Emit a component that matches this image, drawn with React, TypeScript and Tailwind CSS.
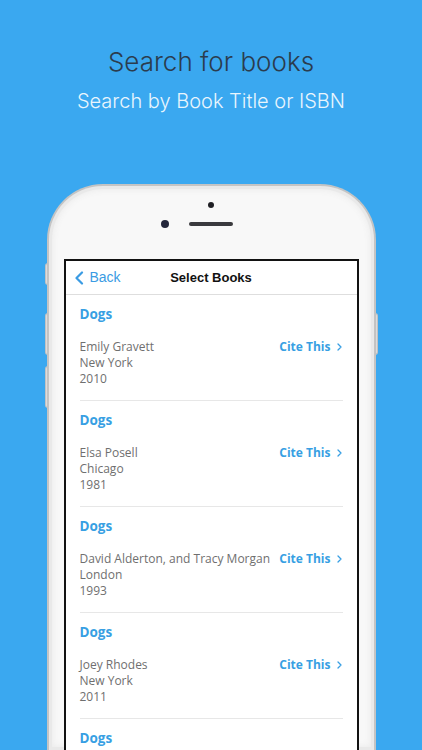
import React from 'react'

interface Book {
  title: string
  author: string
  city: string
  year: string
}

const books: Book[] = [
  { title: 'Dogs', author: 'Emily Gravett', city: 'New York', year: '2010' },
  { title: 'Dogs', author: 'Elsa Posell', city: 'Chicago', year: '1981' },
  { title: 'Dogs', author: 'David Alderton, and Tracy Morgan', city: 'London', year: '1993' },
  { title: 'Dogs', author: 'Joey Rhodes', city: 'New York', year: '2011' },
]

function BookRow({ book }: { book: Book }) {
  return (
    <div className="border-b border-[#e7e7e7] pt-[9px] pb-[13px]">
      <p className="h-[20px] text-[13.5px] leading-[20px] font-bold text-[#389fe3]">{book.title}</p>
      <div className="mt-[15px] flex items-start justify-between">
        <div className="text-[12px] leading-[16px] text-[#6f6f6f]">
          <p>{book.author}</p>
          <p>{book.city}</p>
          <p>{book.year}</p>
        </div>
        <div className="flex items-center gap-[6px] pr-[1px] text-[12px] leading-[16px] font-bold text-[#389fe3]">
          <span>Cite This</span>
          <svg width="5" height="8" viewBox="0 0 5 8" fill="none">
            <path d="M1 1l3 3-3 3" stroke="#389fe3" strokeWidth="1.3" strokeLinecap="round" strokeLinejoin="round" />
          </svg>
        </div>
      </div>
    </div>
  )
}

export default function App() {
  return (
    <div className="h-[750px] overflow-hidden bg-[#3aa8f0] flex flex-col items-center font-['Liberation_Sans',Arial,sans-serif]">
      <h1 className="mt-[46px] font-['Inter',sans-serif] font-light text-[26px] leading-[32px] text-[#2b3c4e]">Search for books</h1>
      <p className="mt-[11px] font-['Inter',sans-serif] font-light text-[20px] leading-[24px] text-[#e9f5fd]">Search by Book Title or ISBN</p>

      <div className="relative mt-[71px] w-[329px] h-[566px] shrink-0 rounded-t-[56px] border-2 border-b-0 border-[#c4c4c4] bg-[#f8f8f8] px-[15px] shadow-[inset_0_0_0_3px_#e9e9e9,inset_0_0_6px_4px_#ececec]">
        {/* side buttons */}
        <span className="absolute left-[-4px] top-[77px] h-[22px] w-[3px] rounded-l-sm bg-[#dcdcdc] border border-[#c2c2c2]" />
        <span className="absolute left-[-4px] top-[127px] h-[42px] w-[3px] rounded-l-sm bg-[#dcdcdc] border border-[#c2c2c2]" />
        <span className="absolute left-[-4px] top-[180px] h-[42px] w-[3px] rounded-l-sm bg-[#dcdcdc] border border-[#c2c2c2]" />
        <span className="absolute right-[-4px] top-[127px] h-[42px] w-[3px] rounded-r-sm bg-[#dcdcdc] border border-[#c2c2c2]" />

        <div className="h-[73px] flex flex-col items-center">
          <span className="mt-[16px] h-[6px] w-[6px] rounded-full bg-[#1f1f24]" />
          <div className="mt-[12px] flex items-center gap-[20px]">
            <span className="h-[8px] w-[8px] rounded-full bg-[#23263a]" />
            <span className="h-[4px] w-[44px] rounded-full bg-[#3a3a3e]" />
            <span className="h-[8px] w-[8px]" />
          </div>
        </div>

        <div className="h-[493px] overflow-hidden border-2 border-b-0 border-[#121212] bg-white">
          <div className="grid h-[34px] grid-cols-[1fr_auto_1fr] items-center border-b border-[#dedede]">
            <div className="flex items-center gap-[6px] pl-[8px] text-[14px] text-[#3a9be3]">
              <svg width="10" height="14" viewBox="0 0 10 14" fill="none">
                <path d="M8 1.5L2.5 7 8 12.5" stroke="#3a9be3" strokeWidth="2.2" strokeLinecap="round" strokeLinejoin="round" />
              </svg>
              <span>Back</span>
            </div>
            <span className="text-[13px] font-bold text-[#111]">Select Books</span>
            <span />
          </div>
          <div className="px-[14px] font-['Open_Sans',sans-serif]">
            {books.map((b, i) => (
              <BookRow key={i} book={b} />
            ))}
            <p className="pt-[9px] h-[29px] text-[13.5px] leading-[20px] font-bold text-[#389fe3]">Dogs</p>
          </div>
        </div>
      </div>
    </div>
  )
}
